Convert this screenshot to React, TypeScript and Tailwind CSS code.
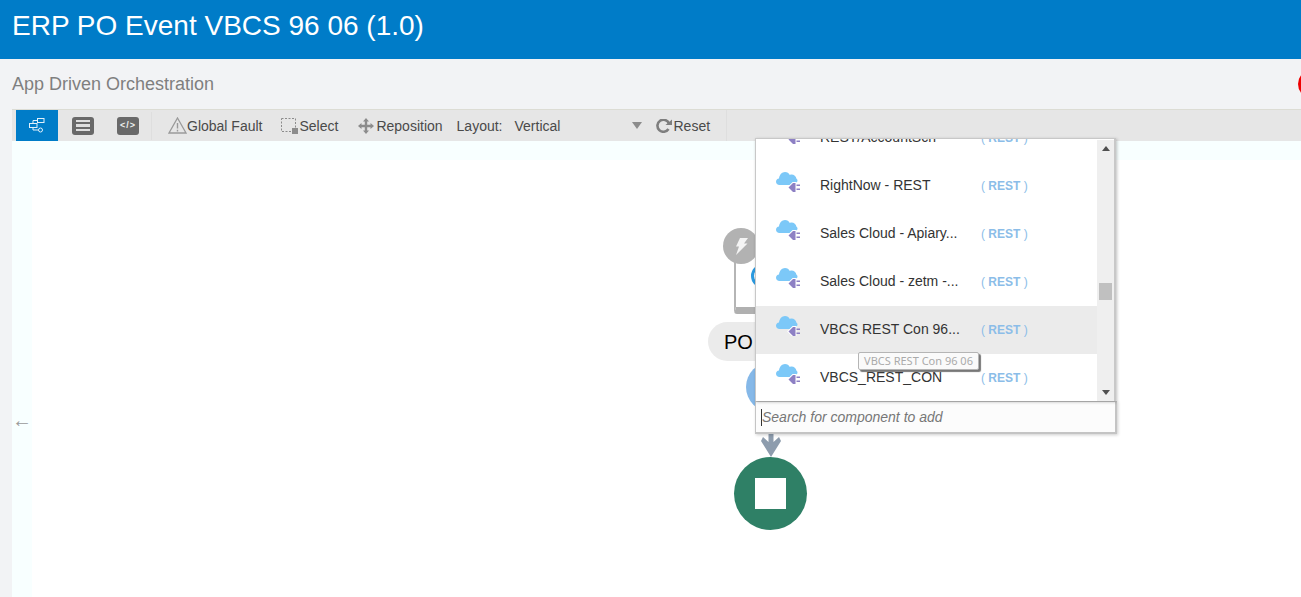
const rows = [
  { name: 'RightNow - REST' },
  { name: 'Sales Cloud - Apiary...' },
  { name: 'Sales Cloud - zetm -...' },
  { name: 'VBCS REST Con 96...', active: true },
  { name: 'VBCS_REST_CON' },
]

const CloudPlug = () => (
  <svg width="24" height="20" viewBox="0 0 24 20" className="mb-[8px] shrink-0">
    <path
      d="M3.5 13C1.4 13 0 11.5 0 9.7 0 8 1.3 6.6 3 6.4 3.4 2.8 6 0 9 0c2.2 0 3.9 1.2 4.8 3 .6-.3 1.2-.4 1.8-.4 2.4 0 4.4 1.9 4.9 4.2.7.4 1 1 1 1.7 0 1.300-1 2.500-2.500 2.500L14 13Z"
      fill="#7cc8f8"
    />
    <path d="M12.500 15.500 17 11H19.500V20H17Z" fill="#8d80c4" stroke="#fff" strokeWidth="2" paintOrder="stroke" />
    <rect x="20.500" y="12.500" width="3.500" height="1.500" fill="#8d80c4" />
    <rect x="20.500" y="16.500" width="3.500" height="1.500" fill="#8d80c4" />
  </svg>
)

const RowType = () => (
  <span className="mb-[1px] whitespace-nowrap text-[12px] text-[#8bbde8]">
    ( <b>REST</b> )
  </span>
)

const ToolLabel = ({ children }: { children: React.ReactNode }) => (
  <span className="mt-[2px] text-[14px] text-[#4a4a4a]">{children}</span>
)

export default function App() {
  return (
    <div className="h-[597px] w-[1301px] overflow-hidden bg-[#f2f3f5] font-['Liberation_Sans',Arial,sans-serif]">
      <div className="flex h-[59px] items-center bg-[#007cc8] pb-[8px] pl-[12px]">
        <h1 className="text-[28px] text-white">ERP PO Event VBCS 96 06 (1.0)</h1>
      </div>

      <div className="relative flex h-[50px] items-center pl-[12px]">
        <span className="text-[18px] text-[#7f7f7f]">App Driven Orchestration</span>
        <div className="absolute left-[1298px] top-[11px] h-[28px] w-[28px] rounded-full bg-[#ee0000]" />
      </div>

      <div className="ml-[12px] flex h-[32px] items-center border-t border-[#dcdcd4] bg-[#e6e6e6]">
        <div className="ml-[4px] flex h-[31px] w-[42px] items-center justify-center bg-[#007cc8]">
          <svg width="16" height="15" viewBox="0 0 16 15" fill="none" stroke="#e2f0fa" strokeWidth="1">
            <rect x="8.500" y="0.500" width="6.500" height="4" />
            <rect x="0.500" y="5.500" width="7.500" height="4" />
            <circle cx="11.500" cy="12" r="2" />
            <path d="M8.500 2.500H4V5.500M4 9.500V12H9.500" />
          </svg>
        </div>
        <div className="ml-[14px] flex h-[18px] w-[22px] flex-col justify-center gap-[2px] rounded-[3px] bg-[#696969] px-[4px]">
          <div className="h-[2.500px] bg-[#dedede]" />
          <div className="h-[2.500px] bg-[#dedede]" />
          <div className="h-[2.500px] bg-[#dedede]" />
        </div>
        <div className="ml-[23px] flex h-[18px] w-[22px] items-center justify-center rounded-[3px] bg-[#696969] text-[9px] font-bold tracking-[1px] text-[#eeeeee]">
          {'</>'}
        </div>
        <div className="ml-[12px] h-[28px] w-px bg-[#dedede]" />

        <svg width="19" height="17" viewBox="0 0 19 17" className="ml-[16px]" fill="none">
          <path d="M9.500 1 18 16H1Z" stroke="#9a9a9a" strokeWidth="1.300" />
          <path d="M9.500 6V11.500M9.500 12.800V14.500" stroke="#9a9a9a" strokeWidth="1.400" />
        </svg>
        <ToolLabel>Global Fault</ToolLabel>

        <svg width="18" height="16" viewBox="0 0 18 16" className="ml-[19px]" fill="none">
          <rect x="0.500" y="0.500" width="14" height="13" stroke="#8c8c8c" strokeDasharray="2 1.500" />
          <rect x="11" y="10" width="6" height="6" fill="#8c8c8c" />
        </svg>
        <ToolLabel>Select</ToolLabel>

        <svg width="16" height="16" viewBox="0 0 16 16" className="ml-[20px] mr-[2px]" fill="#8c8c8c">
          <path d="M8 0 11 3.500H9.200V6.800H12.500V5L16 8 12.500 11V9.200H9.200V12.500H11L8 16 5 12.500H6.800V9.200H3.500V11L0 8 3.500 5V6.800H6.800V3.500H5Z" />
        </svg>
        <ToolLabel>Reposition</ToolLabel>

        <span className="ml-[14px] flex">
          <ToolLabel>Layout:</ToolLabel>
        </span>
        <span className="ml-[12px] flex w-[117px]">
          <ToolLabel>Vertical</ToolLabel>
        </span>
        <div className="h-0 w-0 border-x-[5px] border-t-[7px] border-x-transparent border-t-[#8c8c8c]" />
        <svg width="16" height="14" viewBox="0 0 16 14" className="ml-[14px] mr-[2px] mt-[1px]" fill="none">
          <path d="M13 4.500A6 6 0 1 0 12.500 10" stroke="#7e7e7e" strokeWidth="2.600" />
          <path d="M9.500 6H16V0.500Z" fill="#7e7e7e" />
        </svg>
        <ToolLabel>Reset</ToolLabel>
        <div className="ml-[16px] h-[31px] w-px bg-[#dedede]" />
      </div>

      <div className="relative ml-[12px] h-[456px] bg-white">
        <div className="h-[19px] bg-[#f8ffff]" />
        <div className="absolute bottom-0 left-0 top-0 w-[20px] bg-[#f8ffff]" />
        <span className="absolute left-0 top-[269px] text-[20px] leading-none text-[#9a9a9a]">←</span>

        {/* diagram nodes, coordinates are the canvas */}
        <div className="absolute left-[722px] top-[110px] h-[63px] w-[100px] rounded-b-[3px] border-l-2 border-b-[7px] border-l-[#b5b5b5] border-b-[#b0b0b0] bg-white" />
        <div className="absolute left-[739px] top-[123px] h-[24px] w-[24px] rounded-full border-[3px] border-[#2a9ae0]" />
        <div className="absolute left-[711px] top-[87px] flex h-[36px] w-[36px] items-center justify-center rounded-full bg-[#b2b2b2]">
          <svg width="13" height="17" viewBox="0 0 13 17" fill="#f4f4f4">
            <path d="M5 0H13L9 5.500H12.500L1 17 4 8.500H1Z" />
          </svg>
        </div>
        <div className="absolute left-[696px] top-[181px] flex h-[39px] w-[160px] items-center rounded-full bg-[#ebebeb] pl-[16px] text-[20px] text-black">
          PO
        </div>
        <div className="absolute left-[734px] top-[221px] h-[50px] w-[50px] rounded-full bg-[#85b8e8]" />
        <svg width="20" height="30" viewBox="0 0 20 30" className="absolute left-[749px] top-[286px]" fill="#8d9cad">
          <path d="M7.500 0H12.500V15L18 10 20 14 10 30 0 14 2 10 7.500 15Z" />
        </svg>
        <div className="absolute left-[722px] top-[316px] flex h-[73px] w-[73px] items-center justify-center rounded-full bg-[#2f8066]">
          <div className="h-[31px] w-[31px] bg-white" />
        </div>

        {/* component picker */}
        <div className="absolute left-[743px] top-[-3px] w-[361px]">
          <div className="relative h-[263px] w-[361px] overflow-hidden border-l border-t border-r-2 border-[#c8c8c8] bg-white shadow-[1px_1px_3px_rgba(0,0,0,0.25)]">
            <div className="absolute left-0 right-[17px] top-[-25px]">
              <div className="flex h-[48px] items-center pl-[20px]">
                <CloudPlug />
                <span className="mb-[2px] ml-[20px] w-[161px] text-[14px] text-[#333]">REST/AccountSch</span>
                <RowType />
              </div>
              {rows.map((row) => (
                <div
                  key={row.name}
                  className={`flex h-[48px] items-center pl-[20px] ${row.active ? 'bg-[#ebebeb]' : ''}`}
                >
                  <CloudPlug />
                  <span className="mb-[2px] ml-[20px] w-[161px] whitespace-nowrap text-[14px] text-[#333]">{row.name}</span>
                  <RowType />
                </div>
              ))}
            </div>
            <div className="absolute bottom-0 right-0 top-[1px] flex w-[17px] flex-col items-center justify-between bg-[#efefef] py-[6px]">
              <div className="h-0 w-0 border-x-[4px] border-b-[5px] border-x-transparent border-b-[#505050]" />
              <div className="h-0 w-0 border-x-[4px] border-t-[5px] border-x-transparent border-t-[#505050]" />
            </div>
            <div className="absolute right-[2px] top-[144px] h-[17px] w-[13px] bg-[#c0c0c0]" />
          </div>
          <div className="flex h-[33px] w-[362px] items-center border-2 border-l border-t-[1.500px] border-[#c4c4c4] bg-[#fcfcfc] pl-[5px] text-[14px] italic text-[#777] shadow-[1px_1px_3px_rgba(0,0,0,0.2)]">
            <span className="h-[17px] w-px bg-[#333]" />
            Search for component to add
          </div>
          <div className="absolute left-[103px] top-[214px] flex h-[18px] w-[121px] items-center justify-center whitespace-nowrap rounded-[2px] border border-[#b5b5b5] bg-[#fafafa] font-['Noto_Sans',sans-serif] text-[11px] text-[#aaa] shadow-[2px_2px_1px_#777]">
            VBCS REST Con 96 06
          </div>
        </div>
      </div>
    </div>
  )
}
